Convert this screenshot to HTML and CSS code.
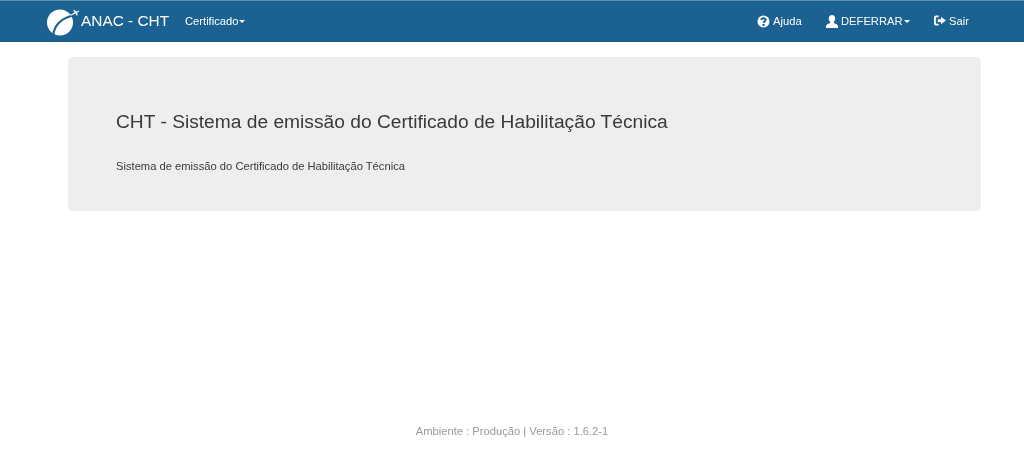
FILE: index.html
```html
<!DOCTYPE html>
<html lang="pt-BR">
<head>
    <meta charset="UTF-8">
    <meta name="viewport" content="width=device-width, initial-scale=1.0">
    <title>ANAC - CHT</title>
    <link rel="stylesheet" href="styles.css">
</head>
<body>
    <nav class="navbar">
        <div class="nav-left">
            <a class="brand" href="#">
                <svg class="logo" width="34" height="30" viewBox="0 0 34 30">
                    <circle cx="14" cy="16.500" r="13" fill="#fff"/>
                    <path fill="none" stroke="#1b6292" stroke-width="2.200" d="M7 30C8 21 14 12 29 9"/>
                    <path fill="#dfe9f0" d="M24 9L28.500 6.300L27 4L28 3.800L30.800 5.500L33 4.500L33.500 5.200L31.500 6.500L31.500 9.500L30.600 9.700L29.500 7.500L25 9.800Z"/>
                </svg>
                <span>ANAC - CHT</span>
            </a>
            <a class="nav-link" href="#">Certificado<i class="caret"></i></a>
        </div>
        <div class="nav-right">
            <a class="nav-link" href="#">
                <svg class="icon" width="13" height="13" viewBox="0 0 13 13">
                    <circle cx="6.500" cy="6.500" r="6" fill="#fff"/>
                    <path fill="none" stroke="#1b6292" stroke-width="2" d="M4.300 5C4.500 3.700 5.400 3.200 6.500 3.200C7.700 3.200 8.600 3.900 8.600 4.900C8.600 6.200 6.600 6.300 6.600 7.900"/>
                    <rect x="5.500" y="9" width="2.100" height="2" fill="#1b6292"/>
                </svg>
                Ajuda
            </a>
            <a class="nav-link user" href="#">
                <svg class="icon" width="12" height="13" viewBox="0 0 12 13">
                    <path fill="#fff" d="M6 0C8 0 9.200 1.500 9.200 3.500C9.200 5 8.600 6.300 7.800 7C7.800 8 8.500 8.500 10 9C11.300 9.500 12 10 12 11.500V13H0V11.500C0 10 .7 9.500 2 9C3.500 8.500 4.200 8 4.200 7C3.400 6.300 2.800 5 2.800 3.500C2.800 1.500 4 0 6 0Z"/>
                </svg>
                DEFERRAR<i class="caret"></i>
            </a>
            <a class="nav-link" href="#">
                <svg class="icon" width="12" height="12" viewBox="0 0 13 12">
                    <path fill="#fff" d="M5 0H2.500C1 0 0 1 0 2.500V8.500C0 10 1 11 2.500 11H5V9H2.800C2.300 9 2 8.700 2 8.200V2.800C2 2.300 2.300 2 2.800 2H5Z"/>
                    <path fill="#fff" d="M7.500 1.500L13 5.500L7.500 9.500V7H4V4H7.500Z"/>
                </svg>
                Sair
            </a>
        </div>
    </nav>

    <main class="jumbotron">
        <h1>CHT - Sistema de emissão do Certificado de Habilitação Técnica</h1>
        <p>Sistema de emissão do Certificado de Habilitação Técnica</p>
    </main>

    <footer>Ambiente : Produção | Versão : 1.6.2-1</footer>
</body>
</html>
```

FILE: styles.css
```css
html, body {
    height: 463px;
}
body {
    font-family: "Liberation Sans", Arial, sans-serif;
    font-size: 11.2px;
    color: #3a3a3a;
    background-color: #fff;
    margin: 0;
    display: flex;
    flex-direction: column;
    overflow: hidden;
}
a {
    color: #fff;
    text-decoration: none;
}
.navbar {
    height: 40px;
    flex: none;
    display: flex;
    justify-content: space-between;
    align-items: center;
    background-color: #1b6292;
    border-top: 1px solid #5f90b2;
    border-bottom: 1px solid #1a5c88;
    padding: 0 47px;
}
.nav-left, .nav-right {
    display: flex;
    align-items: center;
}
.nav-right {
    gap: 24px;
    padding-right: 8px;
}
.brand {
    display: flex;
    align-items: center;
    font-size: 15.4px;
    margin-right: 16px;
}
.logo {
    margin-left: -1px;
    margin-right: 1px;
}
.nav-link {
    display: flex;
    align-items: center;
    height: 14px;
    line-height: 14px;
    font-size: 11.2px;
    will-change: transform;
}
.brand span, .jumbotron h1, .jumbotron p, footer {
    will-change: transform;
}
.icon {
    margin-right: 3px;
}
.caret {
    width: 0;
    height: 0;
    margin-left: 1px;
    border-top: 3px solid #fff;
    border-left: 3px solid transparent;
    border-right: 3px solid transparent;
}
.user .caret {
    margin-right: 1px;
}
.jumbotron {
    margin: 15px 43px 0 68px;
    height: 154px;
    box-sizing: border-box;
    padding: 54px 48px 0;
    background-color: #eee;
    border-radius: 5px;
}
.jumbotron h1 {
    font-size: 19.2px;
    font-weight: 400;
    line-height: 22px;
    margin: 0 0 25px;
}
.jumbotron p {
    font-size: 11.2px;
    line-height: 16px;
    margin: 0;
}
footer {
    margin-top: auto;
    padding-bottom: 25px;
    text-align: center;
    font-size: 11.2px;
    line-height: 14px;
    color: #999;
}
```
